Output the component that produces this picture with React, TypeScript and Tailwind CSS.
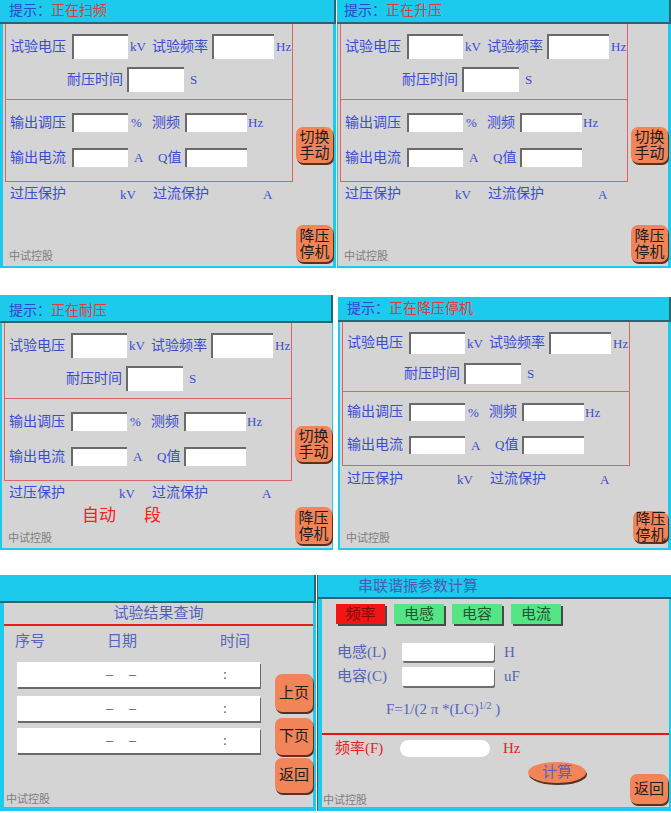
import React from "react";

const LBL = "text-[#3a4cd2] whitespace-nowrap";
const UNIT = "text-[#3a4cd2] text-[13px] whitespace-nowrap";

const Inp = ({ c }: { c: string }) => (
  <div className={"bg-white border-t-2 border-l-2 border-[#6a6a6a] h-full shrink-0 " + c} />
);

const Btn = ({ c, children }: { c: string; children: React.ReactNode }) => (
  <div
    className={
      "bg-[#f2845a] rounded-[7px] shadow-[1px_2px_0_#5a3020] flex flex-col items-center justify-center text-[15px] leading-[16px] text-[#1c1c1c] shrink-0 " +
      c
    }
  >
    {children}
  </div>
);

type MainProps = {
  hint: string;
  outer: string;
  header: string;
  pad: string;
  compact?: boolean;
  showSwitch?: boolean;
  showAuto?: boolean;
};

function MainPanel({ hint, outer, header, pad, compact, showSwitch, showAuto }: MainProps) {
  const sec1 = compact ? "h-[70px] pt-[10px]" : "h-[76px] pt-[10px]";
  const r1 = compact ? "h-[22px]" : "h-[25px]";
  const r2 = compact ? "h-[21px] mt-[9px]" : "h-[25px] mt-[8px]";
  const sec2 = compact ? "h-[73px] pt-[11px]" : "h-[81px] pt-[13px]";
  const r3 = compact ? "h-[18px]" : "h-[19px]";
  const r4 = compact ? "h-[18px] mt-[15px]" : "h-[19px] mt-[16px]";
  const r5 = compact ? "h-[26px]" : "h-[24px]";
  const stop = compact ? "w-[35px] h-[31px] mb-[6px]" : "w-[37px] h-[37px] mb-[4px]";
  return (
    <div className={"flex flex-col bg-[#1ccbeb] shrink-0 " + outer}>
      <div
        className={
          "shrink-0 border-b-2 border-r-2 border-[#2e6470] flex items-center text-[14px] leading-none " + header
        }
      >
        <span className="text-[#2a48d0]">提示：</span>
        <span className="text-[#e23a3a]">{hint}</span>
      </div>
      <div className={"flex-1 min-h-0 flex pb-[2px] " + pad}>
        <div className="flex-1 bg-[#d4d4d4] flex">
          <div className="ml-[2px] w-[288px] shrink-0 flex flex-col text-[14px] leading-none">
            <div className="border-l border-r border-b border-[#e06262]">
              <div className={"border-b border-[#e06262] " + sec1}>
                <div className={"flex items-center pl-[4px] " + r1}>
                  <span className={LBL + " w-[62px]"}>试验电压</span>
                  <Inp c="w-[56px]" />
                  <span className={UNIT + " w-[24px] pl-[2px]"}>kV</span>
                  <span className={LBL + " w-[60px]"}>试验频率</span>
                  <Inp c="w-[62px]" />
                  <span className={UNIT + " pl-[2px]"}>Hz</span>
                </div>
                <div className={"flex items-center pl-[61px] " + r2}>
                  <span className={LBL + " w-[60px]"}>耐压时间</span>
                  <Inp c="w-[57px]" />
                  <span className={UNIT + " pl-[6px]"}>S</span>
                </div>
              </div>
              <div className={sec2}>
                <div className={"flex items-center pl-[4px] " + r3}>
                  <span className={LBL + " w-[62px]"}>输出调压</span>
                  <Inp c="w-[56px]" />
                  <span className={UNIT + " w-[24px] pl-[3px]"}>%</span>
                  <span className={LBL + " w-[33px]"}>测频</span>
                  <Inp c="w-[62px]" />
                  <span className={UNIT + " pl-[1px]"}>Hz</span>
                </div>
                <div className={"flex items-center pl-[4px] " + r4}>
                  <span className={LBL + " w-[62px]"}>输出电流</span>
                  <Inp c="w-[56px]" />
                  <span className={UNIT + " w-[24px] pl-[6px]"}>A</span>
                  <span className={LBL + " w-[33px] pl-[6px]"}>
                    <span className="text-[13px]">Q</span>值
                  </span>
                  <Inp c="w-[62px]" />
                </div>
              </div>
            </div>
            <div className={"flex items-center pl-[5px] " + r5}>
              <span className={LBL + " w-[110px]"}>过压保护</span>
              <span className={UNIT + " w-[33px]"}>kV</span>
              <span className={LBL + " w-[110px]"}>过流保护</span>
              <span className={UNIT}>A</span>
            </div>
            {showAuto && (
              <div className="flex items-center h-[20px] pl-[78px] text-[17px] text-[#f02222]">
                <span className="w-[62px]">自动</span>
                <span>段</span>
              </div>
            )}
            <div className="mt-auto mb-[3px] pl-[4px] text-[11px] leading-[14px] text-[#7d7d7d]">中试控股</div>
          </div>
          <div className="flex-1 ml-[3px] flex flex-col">
            {showSwitch && (
              <Btn c="w-[37px] h-[36px] mt-[103px]">
                <span>切换</span>
                <span>手动</span>
              </Btn>
            )}
            <Btn c={"mt-auto " + stop}>
              <span>降压</span>
              <span>停机</span>
            </Btn>
          </div>
        </div>
      </div>
    </div>
  );
}

const BtnRow = ({ c, t }: { c: string; t: string }) => (
  <div
    className={
      "bg-[#f2845a] rounded-[7px] shadow-[1px_2px_0_#5a3020] flex items-center justify-center text-[15px] leading-none text-[#1c1c1c] shrink-0 " +
      c
    }
  >
    {t}
  </div>
);

function QueryPanel() {
  const rows = ["mt-[6px]", "mt-[9px]", "mt-[7px]"];
  return (
    <div className="w-[316px] h-[236px] bg-[#1ccbeb] flex flex-col shrink-0">
      <div className="h-[28px] shrink-0 border-b-2 border-r-2 border-[#2e6470]" />
      <div className="flex-1 min-h-0 flex pl-[4px] pr-[3px] pb-[4px]">
        <div className="flex-1 bg-[#d4d4d4] flex flex-col">
          <div className="h-[21px] flex items-center justify-center text-[15px] leading-none text-[#5262b8]">
            试验结果查询
          </div>
          <div className="h-[2px] bg-[#e41c1c]" />
          <div className="flex flex-1">
            <div className="w-[271px] flex flex-col">
              <div className="h-[30px] flex items-center pl-[11px] text-[15px] leading-none text-[#5565c0]">
                <span className="w-[92px]">序号</span>
                <span className="w-[113px]">日期</span>
                <span>时间</span>
              </div>
              {rows.map((m, i) => (
                <div
                  key={i}
                  className={
                    "ml-[13px] w-[243px] h-[25px] bg-white shadow-[1px_2px_0_#6a6a6a] flex items-center text-[14px] leading-none text-[#555555] " +
                    m
                  }
                >
                  <span className="ml-[89px] w-[23px]">–</span>
                  <span className="w-[94px]">–</span>
                  <span>:</span>
                </div>
              ))}
              <div className="mt-auto mb-[1px] pl-[2px] text-[11px] leading-[14px] text-[#7d7d7d]">中试控股</div>
            </div>
            <div className="flex flex-col">
              <BtnRow c="w-[38px] h-[38px] mt-[48px]" t="上页" />
              <BtnRow c="w-[38px] h-[37px] mt-[6px]" t="下页" />
              <BtnRow c="w-[38px] h-[35px] mt-[3px]" t="返回" />
            </div>
          </div>
        </div>
      </div>
    </div>
  );
}

function CalcPanel() {
  const tabG =
    "w-[50px] h-[20px] bg-[#55e584] text-[#245535] shadow-[2px_2px_0_#4a4a4a] flex items-center justify-center";
  return (
    <div className="w-[354px] h-[236px] ml-[1px] bg-[#1ccbeb] border-l border-[#2e6470] flex flex-col shrink-0">
      <div className="h-[24px] shrink-0 border-b-2 border-[#2e6470] flex items-center pl-[40px] text-[15px] leading-none text-[#4a5ab8]">
        串联谐振参数计算
      </div>
      <div className="flex-1 min-h-0 flex pl-[4px] pr-[2px] pb-[4px]">
        <div className="flex-1 bg-[#d4d4d4] flex flex-col text-[15px] leading-none">
          <div className="flex mt-[5px] pl-[14px]">
            <div className="w-[49px] h-[20px] bg-[#f21515] text-[#7a0c0c] shadow-[2px_2px_0_#4a4a4a] flex items-center justify-center">
              频率
            </div>
            <div className={"ml-[9px] " + tabG}>电感</div>
            <div className={"ml-[8px] " + tabG}>电容</div>
            <div className={"ml-[9px] " + tabG}>电流</div>
          </div>
          <div className="flex items-center mt-[19px] h-[18px] pl-[15px] text-[#5565b5]">
            <span className="w-[65px] whitespace-nowrap">电感(L)</span>
            <div className="w-[92px] h-full bg-white rounded-[2px] shadow-[1px_2px_0_#6e6e6e]" />
            <span className="ml-[10px]">H</span>
          </div>
          <div className="flex items-center mt-[6px] h-[19px] pl-[15px] text-[#5565b5]">
            <span className="w-[65px] whitespace-nowrap">电容(C)</span>
            <div className="w-[92px] h-full bg-white rounded-[2px] shadow-[1px_2px_0_#6e6e6e]" />
            <span className="ml-[10px]">uF</span>
          </div>
          <div className="flex items-center mt-[13px] h-[20px] pl-[64px] text-[#5565c0] whitespace-nowrap">
            <span>
              F=1/(2 π *(LC)<sup className="text-[10px]">1/2</sup> )
            </span>
          </div>
          <div className="mt-[14px] h-[2px] bg-[#e81414]" />
          <div className="flex items-center mt-[5px] h-[17px] pl-[13px] text-[#e82020]">
            <span className="w-[65px] whitespace-nowrap">频率(F)</span>
            <div className="w-[90px] h-full bg-white rounded-full" />
            <span className="ml-[13px]">Hz</span>
          </div>
          <div className="flex-1 flex">
            <div className="flex-1 flex flex-col">
              <div className="mt-[5px] ml-[206px] w-[58px] h-[21px] rounded-[50%] bg-[#f2845a] shadow-[1px_2px_0_#5a3020] flex items-center justify-center text-[#5565c0]">
                计算
              </div>
              <div className="mt-auto pl-[1px] text-[11px] leading-[14px] text-[#7d7d7d]">中试控股</div>
            </div>
            <BtnRow c="w-[38px] h-[30px] mt-auto mb-[3px] mr-[1px]" t="返回" />
          </div>
        </div>
      </div>
    </div>
  );
}

export default function App() {
  return (
    <div className="w-[671px] h-[813px] bg-white overflow-hidden flex flex-col font-['Liberation_Serif','Noto_Sans_CJK_SC',serif]">
      <div className="flex h-[268px] shrink-0">
        <MainPanel
          hint="正在扫频"
          outer="w-[336px] h-[268px]"
          header="h-[24px] pl-[9px]"
          pad="pl-[3px] pr-[3px]"
          showSwitch
        />
        <div className="w-[1px]" />
        <MainPanel
          hint="正在升压"
          outer="w-[334px] h-[268px]"
          header="h-[24px] pl-[7px]"
          pad="pl-[1px] pr-[3px]"
          showSwitch
        />
      </div>
      <div className="flex h-[255px] mt-[27px] shrink-0">
        <MainPanel
          hint="正在耐压"
          outer="w-[333px] h-[255px]"
          header="h-[28px] pt-[5px] pl-[9px]"
          pad="pl-[2px] pr-[1px]"
          showSwitch
          showAuto
        />
        <MainPanel
          hint="正在降压停机"
          outer="w-[333px] h-[253px] self-end ml-[5px]"
          header="h-[25px] pt-[1px] pl-[9px]"
          pad="pl-[2px] pr-[3px]"
          compact
        />
      </div>
      <div className="flex h-[236px] mt-[25px] shrink-0">
        <QueryPanel />
        <CalcPanel />
      </div>
    </div>
  );
}
